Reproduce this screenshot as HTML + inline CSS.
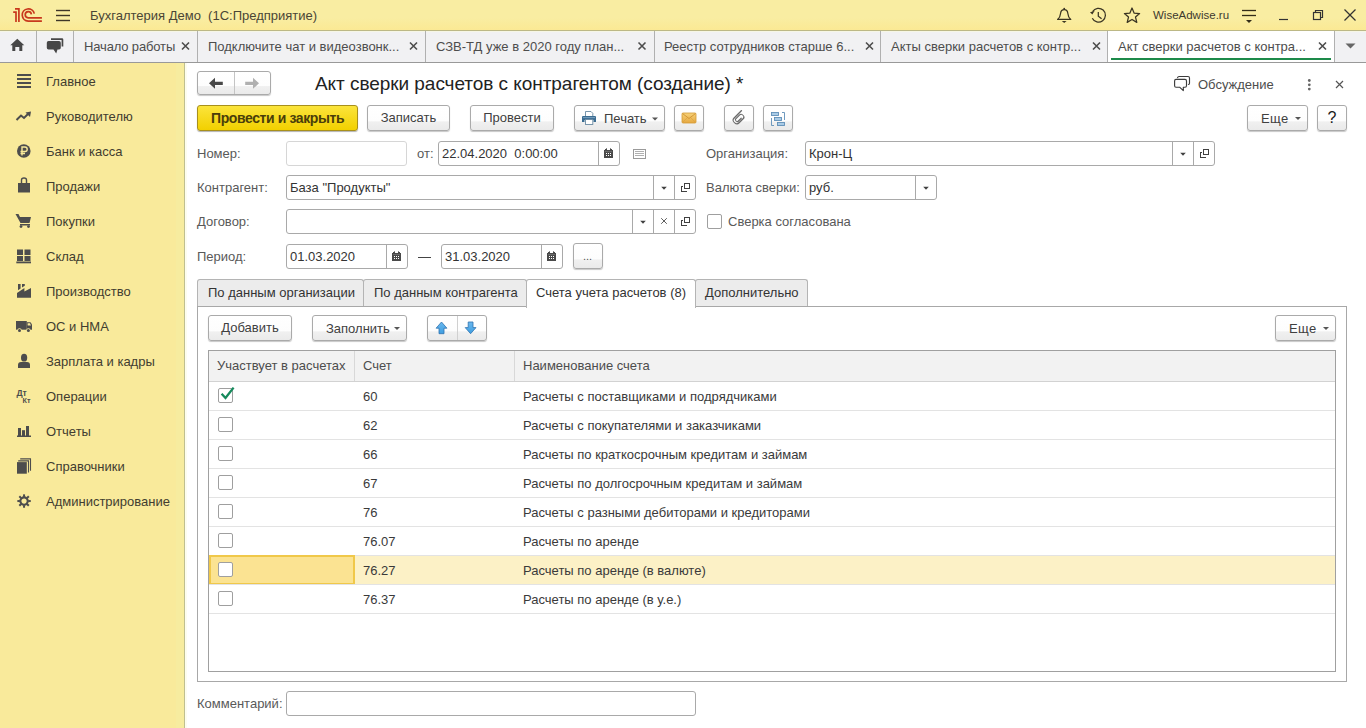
<!DOCTYPE html>
<html><head><meta charset="utf-8">
<style>
*{box-sizing:border-box;margin:0;padding:0}
html,body{width:1366px;height:728px;overflow:hidden;background:#fff}
body{font-family:"Liberation Sans",sans-serif;font-size:13px;color:#4d4d4d;position:relative}
.a{position:absolute}
.t{position:absolute;white-space:nowrap;line-height:15px}
/* top bar */
#top{left:0;top:0;width:1366px;height:31px;background:linear-gradient(#f9eda2 0,#f9eda2 60%,#fbe994 100%);border-bottom:1px solid #bcb886}
#tabs{left:0;top:31px;width:1366px;height:32px;background:#f1f1f3;border-top:1px solid #f6f6e6;border-bottom:1px solid #999}
.sep{position:absolute;top:0;width:1px;height:31px;background:#b0b0b0}
.tx{position:absolute;top:0;font-weight:bold;font-size:13px;color:#4d4d4d}
#side{left:0;top:63px;width:185px;height:665px;background:#f9ea9b;border-right:1px solid #bfbf90}
.si{position:absolute;left:46px;color:#423d30}
.btn{position:absolute;height:26px;border:1px solid #aaa;border-radius:3px;background:linear-gradient(#fff 0,#fdfdfd 62%,#f0f0f0 66%,#eaeaea 100%);box-shadow:0 1px 1px rgba(0,0,0,.22);color:#404040;text-align:center;line-height:23px}
.inp{position:absolute;height:25px;border:1px solid #a9a9a9;border-radius:3px;background:#fff}
.lbl{position:absolute;color:#595959}
.dd{position:absolute;top:0;width:21px;height:23px;border-left:1px solid #a9a9a9}
.chk{position:absolute;width:15px;height:15px;border:1px solid #9f9f9f;border-radius:2px;background:#fff}
.hline{position:absolute;left:209px;width:1126px;height:1px;background:#e3e3e3}
.cell{position:absolute;color:#3a3a3a}
</style></head><body>

<!-- TOP BAR -->
<div id="top" class="a"></div>
<div id="tabs" class="a"></div>
<div id="side" class="a"></div>

<!-- TOP BAR CONTENT -->
<svg class="a" style="left:0;top:0" width="1366" height="31">
  <!-- 1C logo -->
  <g fill="none" stroke="#c8381d" stroke-width="1.7">
    <path d="M13.2 12.1 L16 12.1 L16 21.9"/>
    <path d="M15 8.9 L18.9 8.9 L18.9 21.9"/>
    <path d="M34.3 13.6 A6.1 6.1 0 1 0 28.2 21.1 L41.9 21.1"/>
    <path d="M31.4 14.4 A3.1 3.1 0 1 0 28.2 17.9 L41.9 17.9"/>
  </g>
  <!-- hamburger -->
  <g stroke="#3e3628" stroke-width="1.4">
    <line x1="56" y1="10.5" x2="70" y2="10.5"/>
    <line x1="56" y1="15.5" x2="70" y2="15.5"/>
    <line x1="56" y1="20.5" x2="70" y2="20.5"/>
  </g>
  <!-- bell -->
  <g fill="none" stroke="#3a3422" stroke-width="1.25" stroke-linejoin="round">
    <path d="M1057.6 19.4 Q1060.3 17.3 1060.6 13.2 Q1061 9.6 1064.2 9.6 Q1067.4 9.6 1067.8 13.2 Q1068.1 17.3 1070.8 19.4 Z"/>
  </g>
  <circle cx="1064.2" cy="8.6" r="0.9" fill="#3a3422"/>
  <path d="M1061.8 21 L1066.6 21 L1064.2 22.9 Z" fill="#3a3422"/>
  <!-- history -->
  <g fill="none" stroke="#3a3422" stroke-width="1.25">
    <path d="M1092.6 11.6 A6.9 6.9 0 1 1 1092.3 18.2"/>
    <path d="M1098.3 12 L1098.3 16.2 L1101.6 18.7"/>
  </g>
  <path d="M1090 12.2 L1094.6 11 L1092.3 14.6 Z" fill="#3a3422"/>
  <!-- star -->
  <path d="M1132 8 L1134.2 13.2 L1139.6 13.6 L1135.5 17.1 L1136.8 22.4 L1132 19.5 L1127.2 22.4 L1128.5 17.1 L1124.4 13.6 L1129.8 13.2 Z" fill="none" stroke="#3a3422" stroke-width="1.25" stroke-linejoin="round"/>
  <!-- filter/menu -->
  <g stroke="#332c18" stroke-width="1.3">
    <line x1="1242" y1="10.5" x2="1256" y2="10.5"/>
    <line x1="1242" y1="15.5" x2="1256" y2="15.5"/>
  </g>
  <path d="M1246 20 L1252 20 L1249 23 Z" fill="#332c18"/>
  <!-- minimize -->
  <line x1="1279" y1="19.5" x2="1288" y2="19.5" stroke="#333" stroke-width="1.2"/>
  <!-- restore -->
  <g fill="none" stroke="#333" stroke-width="1.2">
    <rect x="1313.5" y="12.5" width="7" height="7"/>
    <path d="M1315.5 12.5 L1315.5 10.5 L1322.5 10.5 L1322.5 17.5 L1320.5 17.5"/>
  </g>
  <!-- close -->
  <g stroke="#333" stroke-width="1.3">
    <line x1="1344.5" y1="9.5" x2="1355.5" y2="20.5"/>
    <line x1="1355.5" y1="9.5" x2="1344.5" y2="20.5"/>
  </g>
</svg>
<div class="t" style="left:90px;top:8px;color:#4a4535">Бухгалтерия Демо&nbsp;&nbsp;(1С:Предприятие)</div>
<div class="t" style="left:1153px;top:8px;font-size:11.5px;color:#3e3a2e">WiseAdwise.ru</div>

<!-- TAB BAR CONTENT -->
<div class="sep" style="left:36px;top:31px"></div>
<div class="sep" style="left:73px;top:31px"></div>
<div class="sep" style="left:197px;top:31px"></div>
<div class="sep" style="left:425px;top:31px"></div>
<div class="sep" style="left:654px;top:31px"></div>
<div class="sep" style="left:880px;top:31px"></div>
<div class="sep" style="left:1107px;top:31px"></div>
<div class="sep" style="left:1334px;top:31px"></div>
<div class="a" style="left:1108px;top:31px;width:226px;height:31px;background:#fff"></div>
<div class="a" style="left:1111px;top:57.5px;width:220px;height:2.5px;background:#1d8a4a"></div>
<svg class="a" style="left:0;top:31px" width="1366" height="31">
  <!-- home -->
  <path d="M17.3 7.8 L24.3 14.3 L22.3 14.3 L22.3 20 L19.3 20 L19.3 16 L15.3 16 L15.3 20 L12.3 20 L12.3 14.3 L10.3 14.3 Z" fill="#474747"/>
  <!-- chat -->
  <path d="M51 7.2 L62 7.2 Q63.3 7.2 63.3 8.5 L63.3 15.5 L61.6 15.5 L61.6 8.9 L51 8.9 Z" fill="#474747"/>
  <path d="M48.5 10 L59 10 Q60.8 10 60.8 11.8 L60.8 16.8 Q60.8 18.6 59 18.6 L57.5 18.6 L56.2 22.5 L53.5 18.6 L48.5 18.6 Q46.8 18.6 46.8 16.8 L46.8 11.8 Q46.8 10 48.5 10 Z" fill="#474747"/>
  <!-- dropdown triangle -->
  <path d="M1345.5 12.5 L1355.5 12.5 L1350.5 17.5 Z" fill="#666"/>
</svg>
<div class="t" style="left:84px;top:39px;letter-spacing:-0.15px">Начало работы</div>
<div class="t" style="left:208px;top:39px">Подключите чат и видеозвонк...</div>
<div class="t" style="left:436px;top:39px">СЗВ-ТД уже в 2020 году план...</div>
<div class="t" style="left:664px;top:39px">Реестр сотрудников старше 6...</div>
<div class="t" style="left:891px;top:39px">Акты сверки расчетов с контр...</div>
<div class="t" style="left:1118px;top:39px">Акт сверки расчетов с контра...</div>
<svg class="a" style="left:0;top:31px" width="1366" height="31">
  <g stroke="#4d4d4d" stroke-width="1.6">
    <path d="M182 11.5 L189 18.5 M189 11.5 L182 18.5"/>
    <path d="M410 11.5 L417 18.5 M417 11.5 L410 18.5"/>
    <path d="M638.5 11.5 L645.5 18.5 M645.5 11.5 L638.5 18.5"/>
    <path d="M866 11.5 L873 18.5 M873 11.5 L866 18.5"/>
    <path d="M1093 11.5 L1100 18.5 M1100 11.5 L1093 18.5"/>
    <path d="M1319 11.5 L1326 18.5 M1326 11.5 L1319 18.5"/>
  </g>
</svg>

<!-- SIDEBAR -->
<div class="a" style="left:176px;top:63px;width:8px;height:665px;background:#f7ec9f"></div><div class="a" style="left:185px;top:63px;width:2px;height:665px;background:#fdfdee"></div>
<div class="si t" style="top:74px">Главное</div>
<div class="si t" style="top:109px">Руководителю</div>
<div class="si t" style="top:144px">Банк и касса</div>
<div class="si t" style="top:179px">Продажи</div>
<div class="si t" style="top:214px">Покупки</div>
<div class="si t" style="top:249px">Склад</div>
<div class="si t" style="top:284px">Производство</div>
<div class="si t" style="top:319px">ОС и НМА</div>
<div class="si t" style="top:354px">Зарплата и кадры</div>
<div class="si t" style="top:389px">Операции</div>
<div class="si t" style="top:424px">Отчеты</div>
<div class="si t" style="top:459px">Справочники</div>
<div class="si t" style="top:494px">Администрирование</div>
<svg class="a" style="left:0;top:63px" width="185" height="460" fill="#4d4d4d">
  <!-- Главное: 4 lines  y 74-88 -->
  <rect x="17" y="11" width="14" height="2"/>
  <rect x="17" y="15" width="14" height="2"/>
  <rect x="17" y="19" width="14" height="2"/>
  <rect x="17" y="23" width="14" height="2"/>
  <!-- Руководителю: trend -->
  <path d="M16.5 57 L21 52.5 L24 55 L28 51" fill="none" stroke="#4d4d4d" stroke-width="2"/>
  <path d="M25.5 49.5 L31 48.5 L30 54 Z"/>
  <!-- Банк: ruble circle center (23.5, 88) -->
  <circle cx="23.8" cy="88" r="6.8"/>
  <path d="M22 92.5 L22 84 L25 84 Q27.2 84 27.2 86.3 Q27.2 88.5 25 88.5 L20.5 88.5 M20.5 90.5 L25 90.5" fill="none" stroke="#f9ea9b" stroke-width="1.4"/>
  <!-- Продажи: bag -->
  <path d="M18 120 L30 120 L30 129.5 L18 129.5 Z"/>
  <path d="M21.5 121 L21.5 117 Q21.5 115 24 115 Q26.5 115 26.5 117 L26.5 121" fill="none" stroke="#4d4d4d" stroke-width="1.4"/>
  <!-- Покупки: cart -->
  <path d="M15.5 151 L18.5 151 L20 154 L31 154 L29.5 160 L20.5 160 Z"/>
  <rect x="20" y="161" width="10" height="1.5"/>
  <circle cx="21" cy="163.6" r="1.4"/>
  <circle cx="28.5" cy="163.6" r="1.4"/>
  <!-- Склад: grid -->
  <rect x="17" y="186.5" width="6" height="5.5"/>
  <rect x="24.5" y="186.5" width="6" height="5.5"/>
  <rect x="17" y="193" width="6" height="5"/>
  <rect x="24.5" y="193" width="6" height="5"/>
  <rect x="16.3" y="198.5" width="14.7" height="1.8"/>
  <!-- Производство: factory -->
  <path d="M17 234.7 L17 230 L24.4 225 L24.4 228.5 L31 225 L31 234.7 Z"/>
  <path d="M18 221 L20.6 221 L20.6 225.5 L18 227.3 Z"/>
  <path d="M22 221 L24.8 221 L24.8 222.8 L22 224.6 Z"/>
  <!-- ОС: truck -->
  <path d="M16 258 L26.8 258 L26.8 266.7 L16 266.7 Z"/>
  <path d="M26.8 259.2 L30.5 259.2 L32 261.5 L32 266.7 L26.8 266.7 Z"/>
  <path d="M27.6 260.2 L30 260.2 L31 262.6 L27.6 262.6 Z" fill="#f9ea9b"/>
  <circle cx="19.5" cy="267.4" r="2.2" fill="#f9ea9b"/>
  <circle cx="28.4" cy="267.4" r="2.2" fill="#f9ea9b"/>
  <circle cx="19.5" cy="267.4" r="1.5"/>
  <circle cx="28.4" cy="267.4" r="1.5"/>
  <!-- Зарплата: person -->
  <ellipse cx="24.1" cy="294.7" rx="3.1" ry="3.9"/>
  <path d="M18 304.9 L18 302 Q18 299.1 21 299.1 L27 299.1 Q30 299.1 30 302 L30 304.9 Z"/>
  <!-- Операции: Дт Кт -->
  <text x="16.4" y="332.7" font-size="8.6" font-weight="bold" font-family="Liberation Sans">Дт</text>
  <text x="22.5" y="339.9" font-size="7.2" font-weight="bold" font-family="Liberation Sans">Кт</text>
  <!-- Отчеты: bars -->
  <rect x="18" y="365" width="3" height="8"/>
  <rect x="22" y="367.2" width="3" height="5.8"/>
  <rect x="26" y="363" width="3" height="10"/>
  <rect x="17" y="372.5" width="14" height="1.5"/>
  <!-- Справочники -->
  <rect x="17" y="399.1" width="9.8" height="11.6"/>
  <path d="M18.2 397.9 L29 397.9 M28.5 397.4 L28.5 409.6" stroke="#4d4d4d" stroke-width="1.1" fill="none"/>
  <path d="M20.2 395.9 L31 395.9 M30.5 395.4 L30.5 407.7" stroke="#4d4d4d" stroke-width="1.1" fill="none"/>
  <!-- Администрирование: gear -->
  <g transform="translate(24.05,438.05)">
    <circle r="3.7" fill="none" stroke="#4d4d4d" stroke-width="2.1"/>
    <rect x="-1" y="-6.7" width="2" height="2.6" transform="rotate(0)"/><rect x="-1" y="-6.7" width="2" height="2.6" transform="rotate(45)"/><rect x="-1" y="-6.7" width="2" height="2.6" transform="rotate(90)"/><rect x="-1" y="-6.7" width="2" height="2.6" transform="rotate(135)"/><rect x="-1" y="-6.7" width="2" height="2.6" transform="rotate(180)"/><rect x="-1" y="-6.7" width="2" height="2.6" transform="rotate(225)"/><rect x="-1" y="-6.7" width="2" height="2.6" transform="rotate(270)"/><rect x="-1" y="-6.7" width="2" height="2.6" transform="rotate(315)"/>
  </g>
</svg>

<!-- FORM HEADER -->
<div class="btn" style="left:197px;top:71px;width:74px;height:24px"></div>
<div class="a" style="left:234px;top:72px;width:1px;height:22px;background:#c4c4c4"></div>
<svg class="a" style="left:197px;top:71px" width="74" height="24">
  <path d="M12 12.3 L18 6.8 L18 10.7 L25.8 10.7 L25.8 13.9 L18 13.9 L18 17.8 Z" fill="#484848"/>
  <path d="M62 12.3 L56 6.8 L56 10.7 L48.2 10.7 L48.2 13.9 L56 13.9 L56 17.8 Z" fill="#b0b0b0"/>
</svg>
<div class="t" style="left:315px;top:73px;font-size:19px;line-height:22px;color:#222;letter-spacing:-0.05px">Акт сверки расчетов с контрагентом (создание) *</div>
<svg class="a" style="left:1170px;top:72px" width="180" height="24">
  <path d="M6 7.4 L15 7.4 Q16.5 7.4 16.5 8.9 L16.5 13.7 Q16.5 15.2 15 15.2 L13.3 15.2 L13.3 18.6 L9.6 15.2 L6 15.2 Q4.6 15.2 4.6 13.7 L4.6 8.9 Q4.6 7.4 6 7.4 Z" fill="none" stroke="#3d3d3d" stroke-width="1.15" stroke-linejoin="round"/>
  <path d="M7.6 5.6 Q7.9 4.5 9 4.5 L18 4.5 Q19.5 4.5 19.5 6 L19.5 11.2 Q19.5 12.3 18.4 12.5" fill="none" stroke="#3d3d3d" stroke-width="1.15" stroke-linecap="round"/>
  <circle cx="139.3" cy="8.5" r="1.4" fill="#666"/>
  <circle cx="139.3" cy="12.8" r="1.4" fill="#666"/>
  <circle cx="139.3" cy="17.1" r="1.4" fill="#666"/>
  <path d="M166 9 L173 16 M173 9 L166 16" stroke="#555" stroke-width="1.2"/>
</svg>
<div class="t" style="left:1198px;top:77px;color:#4d4d4d">Обсуждение</div>

<!-- BUTTON ROW -->
<div class="a" style="left:197px;top:105px;width:161px;height:26px;border:1px solid #a8901c;border-radius:3px;background:linear-gradient(#fbe43c,#f2d000);box-shadow:0 1px 1px rgba(0,0,0,.3)"></div>
<div class="t" style="left:211px;top:111px;font-weight:bold;font-size:14px;letter-spacing:-0.4px;color:#4a3e0a">Провести и закрыть</div>
<div class="btn" style="left:367px;top:105px;width:83px">Записать</div>
<div class="btn" style="left:470px;top:105px;width:84px">Провести</div>
<div class="btn" style="left:574px;top:105px;width:91px"></div>
<div class="t" style="left:604px;top:111px;color:#404040">Печать</div>
<svg class="a" style="left:574px;top:105px" width="91" height="26">
  <!-- printer -->
  <path d="M11.5 6.5 L17 6.5 L18.8 8.3 L18.8 11.5 L11.5 11.5 Z" fill="#fff" stroke="#6a8aa3" stroke-width="0.9"/>
  <path d="M9 11 L21 11 Q22 11 22 12 L22 17 L19.5 17 L19.5 15 L10.5 15 L10.5 17 L8 17 L8 12 Q8 11 9 11 Z" fill="#3b6d92"/>
  <rect x="9" y="12.2" width="12" height="0.9" fill="#7fa6c4"/>
  <rect x="11.5" y="14.5" width="7.3" height="5" fill="#fff" stroke="#6a8aa3" stroke-width="0.9"/>
  <path d="M78 12.5 L84 12.5 L81 15.5 Z" fill="#555"/>
</svg>
<div class="btn" style="left:674px;top:105px;width:30px"></div>
<svg class="a" style="left:674px;top:105px" width="30" height="26">
  <defs><linearGradient id="env" x1="0" y1="0" x2="0" y2="1"><stop offset="0" stop-color="#f7d27a"/><stop offset="1" stop-color="#e5a840"/></linearGradient></defs>
  <rect x="8" y="8" width="14" height="10" rx="1" fill="url(#env)" stroke="#d39a35" stroke-width="0.8"/>
  <path d="M8.5 8.5 L15 13.5 L21.5 8.5" fill="none" stroke="#c98a2a" stroke-width="0.8"/>
  <path d="M8.5 17.5 L13 13 M21.5 17.5 L17 13" fill="none" stroke="#d9a040" stroke-width="0.6"/>
</svg>
<div class="btn" style="left:724px;top:105px;width:30px"></div>
<svg class="a" style="left:724px;top:105px" width="30" height="26">
  <path transform="translate(15.2,12.8) rotate(45) scale(1.15,0.8)" d="M-3 -8.5 L-3 5 Q-3 8.5 0 8.5 Q3 8.5 3 5 L3 -3 Q3 -5.6 0.75 -5.6 Q-1.5 -5.6 -1.5 -3 L-1.5 4 Q-1.5 5.6 0 5.6 Q1.5 5.6 1.5 4 L1.5 -1.5" fill="none" stroke="#6a6a6a" stroke-width="1.15" stroke-linecap="round"/>
</svg>
<div class="btn" style="left:763px;top:105px;width:30px"></div>
<svg class="a" style="left:763px;top:105px" width="30" height="26">
  <g fill="#a9cbe6" stroke="#5f8fb8" stroke-width="0.9">
    <rect x="8.5" y="7.5" width="7" height="3"/>
    <rect x="11.5" y="12.5" width="7" height="3"/>
    <rect x="14.5" y="17.5" width="7" height="3"/>
  </g>
  <path d="M19 7.5 L21.5 7.5 L21.5 15 M8.5 13 L8.5 20.5 L11 20.5" fill="none" stroke="#5f8fb8" stroke-width="0.9"/>
</svg>
<div class="btn" style="left:1247px;top:105px;width:61px"></div>
<div class="t" style="left:1261px;top:111px;color:#404040;letter-spacing:0.4px">Еще</div>
<svg class="a" style="left:1247px;top:105px" width="61" height="26"><path d="M48 12 L54 12 L51 15 Z" fill="#555"/></svg>
<div class="btn" style="left:1317px;top:105px;width:30px;color:#1a1a1a;font-size:16px;line-height:24px">?</div>

<!-- FORM FIELDS -->
<div class="lbl t" style="left:197px;top:146px">Номер:</div>
<div class="inp" style="left:286px;top:141px;width:121px;border-color:#d6d6d6"></div>
<div class="lbl t" style="left:417px;top:146px">от:</div>
<div class="inp" style="left:438px;top:141px;width:182px"><div class="dd" style="left:159px"></div></div>
<div class="t" style="left:442px;top:146px;color:#333">22.04.2020&nbsp;&nbsp;0:00:00</div>
<svg class="a" style="left:633px;top:149px" width="14" height="11" shape-rendering="crispEdges"><rect x="0.5" y="0.5" width="12" height="9" fill="none" stroke="#9a9a9a" stroke-width="1"/><path d="M2 2.5 L11 2.5 M2 4.5 L11 4.5 M2 6.5 L11 6.5" stroke="#b0b0b0" stroke-width="1"/></svg>
<div class="lbl t" style="left:706px;top:146px">Организация:</div>
<div class="inp" style="left:805px;top:141px;width:410px"><div class="dd" style="left:366px"></div><div class="dd" style="left:387px"></div></div>
<div class="t" style="left:809px;top:146px;color:#333">Крон-Ц</div>

<div class="lbl t" style="left:197px;top:180px">Контрагент:</div>
<div class="inp" style="left:286px;top:175px;width:410px"><div class="dd" style="left:366px"></div><div class="dd" style="left:387px"></div></div>
<div class="t" style="left:290px;top:180px;color:#333">База "Продукты"</div>
<div class="lbl t" style="left:706px;top:180px">Валюта сверки:</div>
<div class="inp" style="left:805px;top:175px;width:132px"><div class="dd" style="left:109px"></div></div>
<div class="t" style="left:809px;top:180px;color:#333">руб.</div>

<div class="lbl t" style="left:197px;top:214px">Договор:</div>
<div class="inp" style="left:286px;top:209px;width:410px"><div class="dd" style="left:345px"></div><div class="dd" style="left:366px"></div><div class="dd" style="left:387px"></div></div>
<div class="chk" style="left:707px;top:214px"></div>
<div class="lbl t" style="left:728px;top:214px">Сверка согласована</div>

<div class="lbl t" style="left:197px;top:249px">Период:</div>
<div class="inp" style="left:286px;top:244px;width:122px"><div class="dd" style="left:99px"></div></div>
<div class="t" style="left:290px;top:249px;color:#333">01.03.2020</div>
<div class="a" style="left:418px;top:257px;width:13px;height:1px;background:#444"></div>
<div class="inp" style="left:441px;top:244px;width:122px"><div class="dd" style="left:99px"></div></div>
<div class="t" style="left:445px;top:249px;color:#333">31.03.2020</div>
<div class="btn" style="left:573px;top:243px;width:30px;height:26px"></div>
<div class="t" style="left:583px;top:249px;color:#555;font-size:11px">...</div>

<!-- TABS PANEL -->
<div class="a" style="left:197px;top:306px;width:1150px;height:376px;border:1px solid #a8a8a8;background:#fff"></div>
<div class="a" style="left:197px;top:279px;width:167px;height:27px;border:1px solid #b4b4b4;border-bottom:none;border-radius:3px 3px 0 0;background:#ececec"></div>
<div class="a" style="left:363px;top:279px;width:164px;height:27px;border:1px solid #b4b4b4;border-bottom:none;border-radius:3px 3px 0 0;background:#ececec"></div>
<div class="a" style="left:695px;top:279px;width:113px;height:27px;border:1px solid #b4b4b4;border-bottom:none;border-radius:3px 3px 0 0;background:#ececec"></div>
<div class="a" style="left:526px;top:279px;width:170px;height:29px;border:1px solid #b4b4b4;border-bottom:none;border-radius:3px 3px 0 0;background:#fff"></div>
<div class="t" style="left:208px;top:285px;color:#333">По данным организации</div>
<div class="t" style="left:374px;top:285px;color:#333">По данным контрагента</div>
<div class="t" style="left:536px;top:285px;color:#333">Счета учета расчетов (8)</div>
<div class="t" style="left:705px;top:285px;color:#333">Дополнительно</div>

<!-- TABLE COMMAND BAR -->
<div class="btn" style="left:208px;top:315px;width:84px">Добавить</div>
<div class="btn" style="left:312px;top:315px;width:95px"></div>
<div class="t" style="left:326px;top:321px;color:#404040">Заполнить</div>
<svg class="a" style="left:312px;top:315px" width="95" height="26"><path d="M82 12 L88 12 L85 15 Z" fill="#555"/></svg>
<div class="btn" style="left:427px;top:315px;width:60px"></div>
<div class="a" style="left:457px;top:316px;width:1px;height:24px;background:#d0d0d0"></div>
<svg class="a" style="left:427px;top:315px" width="60" height="26">
  <defs>
    <linearGradient id="ar" x1="0" y1="0" x2="0" y2="1"><stop offset="0" stop-color="#6ab8ee"/><stop offset="1" stop-color="#3f9ee0"/></linearGradient>
  </defs>
  <path d="M14.5 7 L19.9 13.2 L17 13.2 L17 18.7 L12 18.7 L12 13.2 L9.1 13.2 Z" fill="url(#ar)" stroke="#2f72b0" stroke-width="0.8" stroke-linejoin="round"/>
  <path d="M43.6 18.7 L38.2 12.6 L41.2 12.6 L41.2 7 L46 7 L46 12.6 L49 12.6 Z" fill="url(#ar)" stroke="#2f72b0" stroke-width="0.8" stroke-linejoin="round"/>
</svg>
<div class="btn" style="left:1275px;top:315px;width:61px"></div>
<div class="t" style="left:1289px;top:321px;color:#404040;letter-spacing:0.4px">Еще</div>
<svg class="a" style="left:1275px;top:315px" width="61" height="26"><path d="M48 12 L54 12 L51 15 Z" fill="#555"/></svg>

<!-- TABLE -->
<div class="a" style="left:208px;top:350px;width:1128px;height:322px;border:1px solid #a0a0a0;background:#fff"></div>
<div class="a" style="left:209px;top:351px;width:1126px;height:30px;background:#f2f2f2"></div>
<div class="a" style="left:209px;top:381px;width:1126px;height:1px;background:#d2d2d2"></div>
<div class="a" style="left:354px;top:351px;width:1px;height:30px;background:#d8d8d8"></div>
<div class="a" style="left:514px;top:351px;width:1px;height:30px;background:#d8d8d8"></div>
<div class="t" style="left:217px;top:358px;color:#4d4d4d">Участвует в расчетах</div>
<div class="t" style="left:363px;top:358px;color:#4d4d4d">Счет</div>
<div class="t" style="left:523px;top:358px;color:#4d4d4d">Наименование счета</div>
<div class="hline" style="top:410px"></div>
<div class="chk" style="left:218px;top:388px"></div>
<div class="cell t" style="left:363px;top:389px">60</div>
<div class="cell t" style="left:523px;top:389px">Расчеты с поставщиками и подрядчиками</div>
<div class="hline" style="top:439px"></div>
<div class="chk" style="left:218px;top:417px"></div>
<div class="cell t" style="left:363px;top:418px">62</div>
<div class="cell t" style="left:523px;top:418px">Расчеты с покупателями и заказчиками</div>
<div class="hline" style="top:468px"></div>
<div class="chk" style="left:218px;top:446px"></div>
<div class="cell t" style="left:363px;top:447px">66</div>
<div class="cell t" style="left:523px;top:447px">Расчеты по краткосрочным кредитам и займам</div>
<div class="hline" style="top:497px"></div>
<div class="chk" style="left:218px;top:475px"></div>
<div class="cell t" style="left:363px;top:476px">67</div>
<div class="cell t" style="left:523px;top:476px">Расчеты по долгосрочным кредитам и займам</div>
<div class="hline" style="top:526px"></div>
<div class="chk" style="left:218px;top:504px"></div>
<div class="cell t" style="left:363px;top:505px">76</div>
<div class="cell t" style="left:523px;top:505px">Расчеты с разными дебиторами и кредиторами</div>
<div class="hline" style="top:555px"></div>
<div class="chk" style="left:218px;top:533px"></div>
<div class="cell t" style="left:363px;top:534px">76.07</div>
<div class="cell t" style="left:523px;top:534px">Расчеты по аренде</div>
<div class="a" style="left:209px;top:556px;width:1126px;height:28px;background:#fcf1c6"></div>
<div class="a" style="left:209px;top:555px;width:146px;height:30px;background:#fbe392;border:2px solid #f0c84a"></div>
<div class="hline" style="top:584px"></div>
<div class="chk" style="left:218px;top:562px"></div>
<div class="cell t" style="left:363px;top:563px">76.27</div>
<div class="cell t" style="left:523px;top:563px">Расчеты по аренде (в валюте)</div>
<div class="hline" style="top:613px"></div>
<div class="chk" style="left:218px;top:591px"></div>
<div class="cell t" style="left:363px;top:592px">76.37</div>
<div class="cell t" style="left:523px;top:592px">Расчеты по аренде (в у.е.)</div>
<svg class="a" style="left:217px;top:384px" width="20" height="18"><path d="M4.6 9.8 L8.5 14 L16.6 3.6" fill="none" stroke="#168a5c" stroke-width="2.3"/></svg>

<!-- COMMENT -->
<div class="lbl t" style="left:197px;top:696px">Комментарий:</div>
<div class="inp" style="left:286px;top:691px;width:410px"></div>

<!-- INPUT ICONS -->
<svg class="a" style="left:604px;top:148px" width="10" height="11" shape-rendering="crispEdges"><rect x="0" y="2" width="9" height="8" fill="#4a4a4a"/><rect x="1" y="1" width="2" height="2" fill="#4a4a4a"/><rect x="6" y="1" width="2" height="2" fill="#4a4a4a"/><rect x="2" y="0" width="1" height="1" fill="#888"/><rect x="6" y="0" width="1" height="1" fill="#888"/><rect x="1" y="3" width="7" height="1" fill="#6a6a6a"/><g fill="#fff"><rect x="2" y="5" width="1" height="1"/><rect x="4" y="5" width="1" height="1"/><rect x="6" y="5" width="1" height="1"/><rect x="2" y="7" width="1" height="1"/><rect x="4" y="7" width="1" height="1"/><rect x="6" y="7" width="1" height="1"/></g></svg>
<svg class="a" style="left:1179px;top:152px" width="8" height="5"><path d="M1.2 0.8 L6.8 0.8 L4 3.8 Z" fill="#404040"/></svg>
<svg class="a" style="left:1200px;top:149px" width="10" height="10" shape-rendering="crispEdges"><path d="M3.5 0.5 L8.5 0.5 L8.5 5.5 L3.5 5.5 Z" fill="none" stroke="#404040" stroke-width="1"/><path d="M1.5 3.5 L0.5 3.5 L0.5 8.5 L5.5 8.5 L5.5 7.5" fill="none" stroke="#404040" stroke-width="1"/></svg>
<svg class="a" style="left:660px;top:186px" width="8" height="5"><path d="M1.2 0.8 L6.8 0.8 L4 3.8 Z" fill="#404040"/></svg>
<svg class="a" style="left:681px;top:183px" width="10" height="10" shape-rendering="crispEdges"><path d="M3.5 0.5 L8.5 0.5 L8.5 5.5 L3.5 5.5 Z" fill="none" stroke="#404040" stroke-width="1"/><path d="M1.5 3.5 L0.5 3.5 L0.5 8.5 L5.5 8.5 L5.5 7.5" fill="none" stroke="#404040" stroke-width="1"/></svg>
<svg class="a" style="left:922px;top:186px" width="8" height="5"><path d="M1.2 0.8 L6.8 0.8 L4 3.8 Z" fill="#404040"/></svg>
<svg class="a" style="left:639px;top:220px" width="8" height="5"><path d="M1.2 0.8 L6.8 0.8 L4 3.8 Z" fill="#404040"/></svg>
<svg class="a" style="left:660px;top:217px" width="8" height="8"><path d="M1.2 1.2 L6.8 6.8 M6.8 1.2 L1.2 6.8" stroke="#555" stroke-width="0.95"/></svg>
<svg class="a" style="left:681px;top:217px" width="10" height="10" shape-rendering="crispEdges"><path d="M3.5 0.5 L8.5 0.5 L8.5 5.5 L3.5 5.5 Z" fill="none" stroke="#404040" stroke-width="1"/><path d="M1.5 3.5 L0.5 3.5 L0.5 8.5 L5.5 8.5 L5.5 7.5" fill="none" stroke="#404040" stroke-width="1"/></svg>
<svg class="a" style="left:392px;top:251px" width="10" height="11" shape-rendering="crispEdges"><rect x="0" y="2" width="9" height="8" fill="#4a4a4a"/><rect x="1" y="1" width="2" height="2" fill="#4a4a4a"/><rect x="6" y="1" width="2" height="2" fill="#4a4a4a"/><rect x="2" y="0" width="1" height="1" fill="#888"/><rect x="6" y="0" width="1" height="1" fill="#888"/><rect x="1" y="3" width="7" height="1" fill="#6a6a6a"/><g fill="#fff"><rect x="2" y="5" width="1" height="1"/><rect x="4" y="5" width="1" height="1"/><rect x="6" y="5" width="1" height="1"/><rect x="2" y="7" width="1" height="1"/><rect x="4" y="7" width="1" height="1"/><rect x="6" y="7" width="1" height="1"/></g></svg>
<svg class="a" style="left:547px;top:251px" width="10" height="11" shape-rendering="crispEdges"><rect x="0" y="2" width="9" height="8" fill="#4a4a4a"/><rect x="1" y="1" width="2" height="2" fill="#4a4a4a"/><rect x="6" y="1" width="2" height="2" fill="#4a4a4a"/><rect x="2" y="0" width="1" height="1" fill="#888"/><rect x="6" y="0" width="1" height="1" fill="#888"/><rect x="1" y="3" width="7" height="1" fill="#6a6a6a"/><g fill="#fff"><rect x="2" y="5" width="1" height="1"/><rect x="4" y="5" width="1" height="1"/><rect x="6" y="5" width="1" height="1"/><rect x="2" y="7" width="1" height="1"/><rect x="4" y="7" width="1" height="1"/><rect x="6" y="7" width="1" height="1"/></g></svg>
</body></html>
